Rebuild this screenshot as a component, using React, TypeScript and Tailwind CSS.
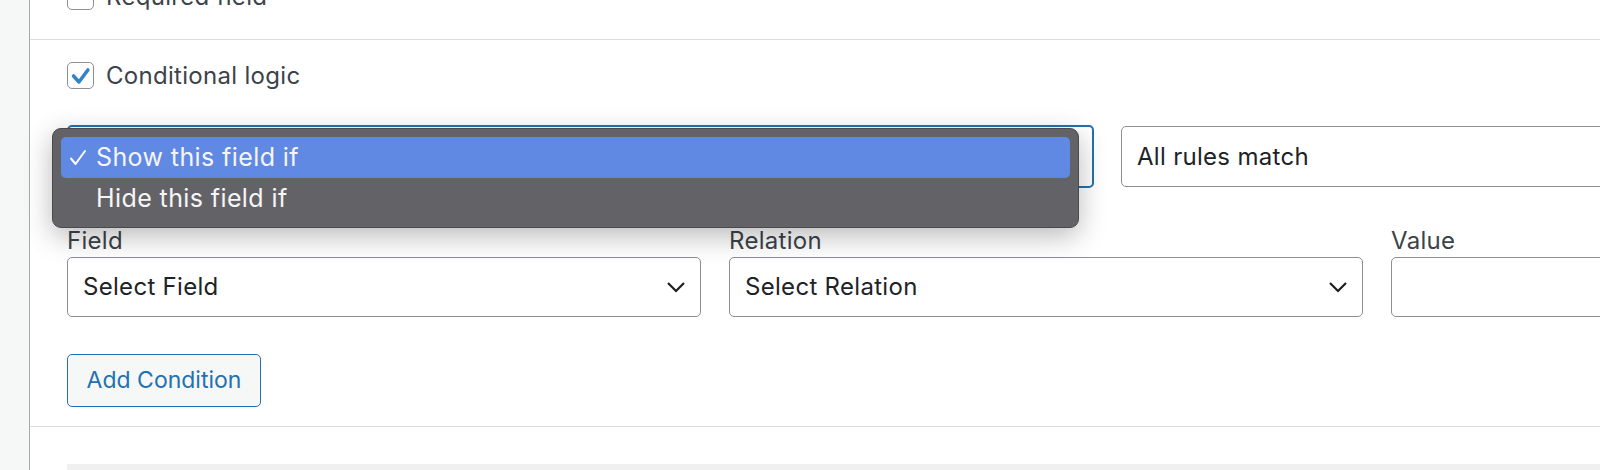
import React from 'react';

function Checkbox({ checked = false }: { checked?: boolean }) {
  return (
    <span className="flex h-[27px] w-[27px] shrink-0 items-center justify-center rounded-[5px] border border-[#8c8f94] bg-white">
      {checked && (
        <svg viewBox="0 0 27 27" className="h-[27px] w-[27px]">
          <path d="M6 14 L11.8 20.5 L21.5 7.5" fill="none" stroke="#3582c4" strokeWidth="3.8" strokeLinecap="round" strokeLinejoin="round" />
        </svg>
      )}
    </span>
  );
}

function Chevron() {
  return (
    <svg viewBox="0 0 20 12" className="h-[12px] w-[20px]">
      <path d="M2 2 L10 10 L18 2" fill="none" stroke="#1e1e1e" strokeWidth="2.2" />
    </svg>
  );
}

function SelectBox({ placeholder }: { placeholder: string }) {
  return (
    <div className="flex h-[60px] items-center justify-between rounded-[5px] border border-[#8c8f94] bg-white pl-[15px] pr-[14px] text-[24px] tracking-[0.3px] text-[#1d2327]">
      <span>{placeholder}</span>
      <Chevron />
    </div>
  );
}

export default function App() {
  return (
    <div className="flex h-[470px] w-[1600px] overflow-hidden bg-[#f6f7f7] text-[#1d2327] [font-family:Inter,'Noto_Sans',sans-serif]">
      <div className="w-[29px] shrink-0" />
      <div className="min-w-0 flex-1 border-l border-[#a7aaad] bg-white">
        {/* previous row, scrolled off the top */}
        <div className="-mt-[17px] flex items-center gap-[12px] border-b border-[#dcdcde] pb-[29px] pl-[37px]">
          <Checkbox />
          <span className="text-[24px] leading-[27px] tracking-[0.3px] text-[#3c434a]">Required field</span>
        </div>

        <div className="border-b border-[#dcdcde] pb-[19px] pl-[37px] pt-[22px]">
          <label className="flex items-center gap-[12px]">
            <Checkbox checked />
            <span className="text-[24px] leading-[27px] tracking-[0.3px] text-[#3c434a]">Conditional logic</span>
          </label>

          <div className="relative mt-[36px] flex items-center gap-[27px]">
            <div className="h-[63px] w-[1027px] shrink-0 rounded-[5px] border-2 border-[#2271b1] bg-white" />
            <div className="flex h-[61px] w-[600px] shrink-0 items-center rounded-[5px] border border-[#8c8f94] bg-white px-[15px] text-[24px] tracking-[0.3px]">
              All rules match
            </div>

            {/* native select menu, open */}
            <div className="absolute left-[-15px] top-[3px] w-[1027px] rounded-[9px] border border-[#4a4a4d] bg-[#636367] p-[8px] text-[25px] tracking-[0.4px] text-[#f5f5f7] shadow-[0_8px_28px_rgba(0,0,0,0.28)]">
              <div className="flex h-[41px] items-center rounded-[5px] bg-[#6089e3]">
                <svg viewBox="0 0 20 20" className="ml-[7px] mr-[8px] h-[20px] w-[20px]">
                  <path d="M3 10.5 L7.5 16 L17 3" fill="none" stroke="#ffffff" strokeWidth="2" strokeLinecap="round" strokeLinejoin="round" />
                </svg>
                <span>Show this field if</span>
              </div>
              <div className="flex h-[41px] items-center pl-[35px]">Hide this field if</div>
            </div>
          </div>

          <div className="mt-[40px] grid grid-cols-[634px_634px_634px] gap-x-[28px]">
            <div>
              <div className="mb-[3px] text-[24px] leading-[26px] tracking-[0.3px] text-[#3c434a]">Field</div>
              <SelectBox placeholder="Select Field" />
            </div>
            <div>
              <div className="mb-[3px] text-[24px] leading-[26px] tracking-[0.3px] text-[#3c434a]">Relation</div>
              <SelectBox placeholder="Select Relation" />
            </div>
            <div>
              <div className="mb-[3px] text-[24px] leading-[26px] tracking-[0.3px] text-[#3c434a]">Value</div>
              <div className="h-[60px] rounded-[5px] border border-[#8c8f94] bg-white" />
            </div>
          </div>

          <button className="mt-[37px] h-[53px] w-[194px] rounded-[5px] border border-[#2271b1] bg-[#f6f7f7] text-[23px] text-[#2271b1]">
            Add Condition
          </button>
        </div>

        <div className="pl-[37px] pt-[37px]">
          <div className="h-[40px] bg-[#f0f0f1]" />
        </div>
      </div>
    </div>
  );
}
